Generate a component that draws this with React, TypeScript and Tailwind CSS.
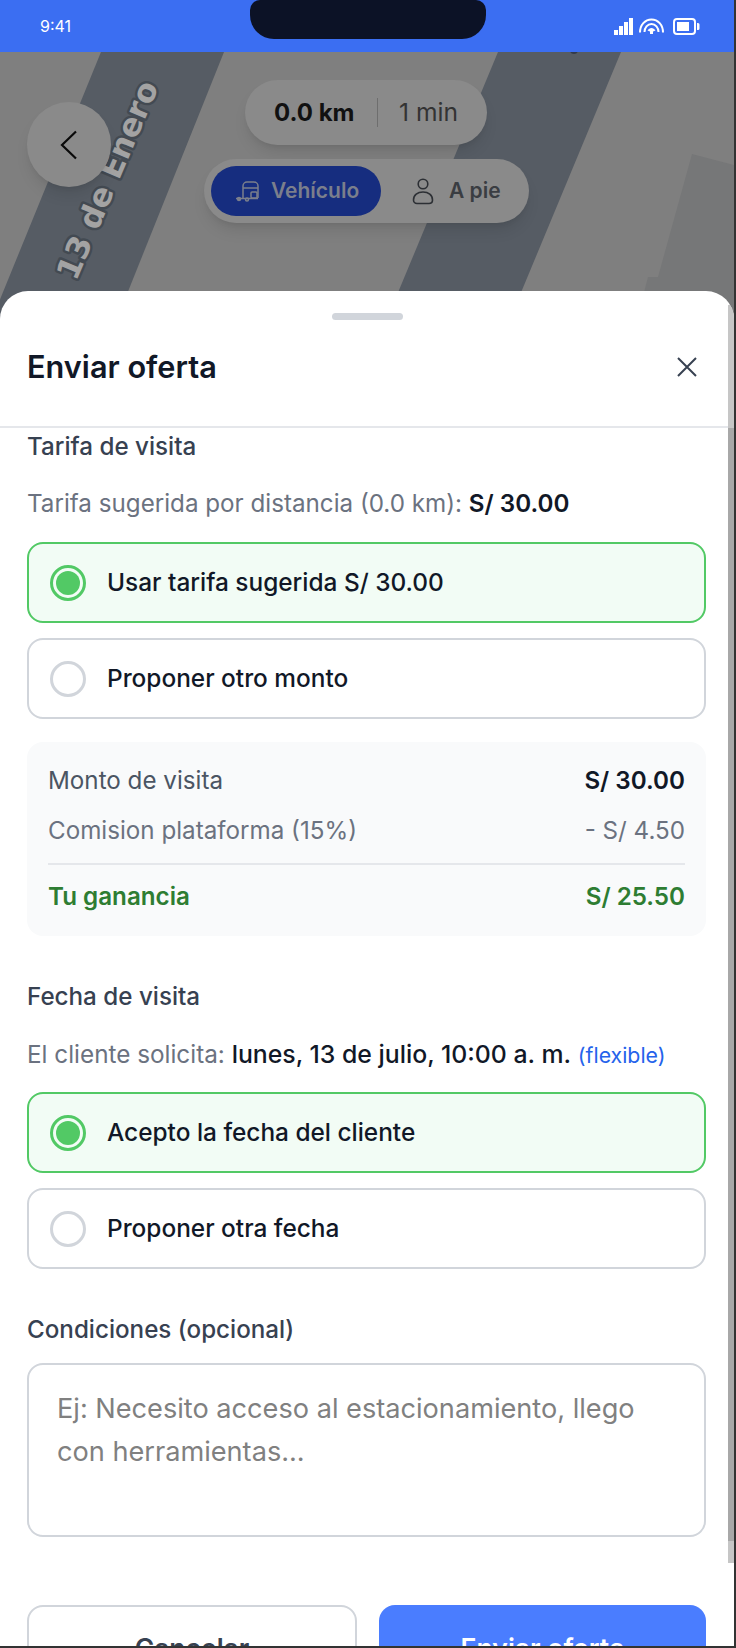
import React from "react";

function SignalIcon() {
  return (
    <svg width="19" height="17" viewBox="0 0 19 17" fill="white" aria-hidden="true">
      <rect x="0" y="12" width="4" height="5" />
      <rect x="5" y="8" width="4" height="9" />
      <rect x="10" y="4" width="4" height="13" />
      <rect x="15" y="0" width="4" height="17" />
    </svg>
  );
}

function WifiIcon() {
  return (
    <svg width="25" height="16" viewBox="0 0 25 16" fill="none" stroke="white" strokeWidth="2" aria-hidden="true">
      <path d="M1 14.500C1 7 6 1.500 12.500 1.500S24 7 24 14.500" />
      <path d="M5.500 14C5.500 9.500 8.500 6 12.500 6S19.500 9.500 19.500 14" />
      <path d="M8.500 12.500C9.500 11 11 10 12.500 10S15.500 11 16.500 12.500L14 13.500V16H11V13.500Z" fill="white" stroke="none" />
    </svg>
  );
}

function BatteryIcon() {
  return (
    <svg width="27" height="17" viewBox="0 0 27 17" fill="none" aria-hidden="true">
      <rect x="1" y="1" width="21" height="15" rx="3" stroke="white" strokeWidth="2" />
      <rect x="4" y="4" width="12" height="9" fill="white" />
      <path d="M24 5h1a1.500 1.500 0 0 1 1.500 1.500v4A1.500 1.500 0 0 1 25 12h-1z" fill="white" />
    </svg>
  );
}

function VehicleIcon() {
  return (
    <svg width="24" height="21" viewBox="0 0 24 21" fill="none" stroke="#7b7f8c" strokeWidth="1.500" aria-hidden="true">
      <path d="M8 17V5a4 4 0 0 1 4-4h7a4 4 0 0 1 4 4v12" />
      <path d="M8 7h15" />
      <rect x="16" y="11" width="6" height="6" rx="1" />
      <path d="M1 17.500h22" />
      <circle cx="4" cy="18" r="1.500" fill="#7b7f8c" />
      <circle cx="12" cy="18.500" r="1.500" />
    </svg>
  );
}

function PersonIcon() {
  return (
    <svg width="22" height="27" viewBox="0 0 22 27" fill="none" stroke="#2c2f34" strokeWidth="1.600" aria-hidden="true">
      <circle cx="11" cy="6" r="4.800" />
      <path d="M1.500 22c0-5 4-8 9.500-8s9.500 3 9.500 8c0 2-1.500 3.500-3.500 3.500H5c-2 0-3.500-1.500-3.500-3.500z" />
    </svg>
  );
}

function MapBackground() {
  return (
    <svg className="absolute inset-0" width="734" height="267" viewBox="0 52 734 267" aria-hidden="true">
      <rect x="0" y="52" width="734" height="267" fill="#7f7f7f" />
      <path d="M692 154L734 165V319H637L648 277L658 277Z" fill="#767778" />
      <path d="M101 52H224L117 319H-8Z" fill="#565c64" />
      <path d="M498 52H621L510 319H387Z" fill="#565c64" />
      <circle cx="574" cy="50" r="4" fill="#333a48" />
      <text
        x="76"
        y="282"
        transform="rotate(-67 76 282)"
        fontFamily="'DejaVu Sans', sans-serif"
        fontWeight="700"
        fontSize="31.500"
        fill="#a3a3a3"
        stroke="#434a52"
        strokeWidth="5"
        strokeLinejoin="round"
        style={{ paintOrder: "stroke" }}
      >
        13 de Enero
      </text>
    </svg>
  );
}

function OptionCard({ label, selected }: { label: string; selected?: boolean }) {
  return (
    <div
      className={
        selected
          ? "flex h-[81px] items-center gap-[21px] rounded-[16px] border-2 border-[#52c965] bg-[#f2fcf5] pl-[21px]"
          : "flex h-[81px] items-center gap-[21px] rounded-[16px] border-2 border-[#d1d5db] bg-white pl-[21px]"
      }
    >
      <span
        className={
          selected
            ? "flex h-[36px] w-[36px] items-center justify-center rounded-full border-[3px] border-[#52c965]"
            : "h-[36px] w-[36px] rounded-full border-[3px] border-[#d1d5db]"
        }
      >
        {selected && <span className="h-[24px] w-[24px] rounded-full bg-[#52c965]" />}
      </span>
      <span className="text-[24.400px] leading-none font-medium text-[#111827]">{label}</span>
    </div>
  );
}

export default function App() {
  return (
    <div className="flex h-[1648px] w-[736px] flex-col overflow-hidden border-r-2 border-b-2 border-[#333333] bg-white font-['Inter',sans-serif]">
      <div className="relative flex h-[52px] shrink-0 items-center justify-between bg-[#3b6ef2] pr-[34px] pl-[40px]">
        <span className="text-[16px] font-normal text-white">9:41</span>
        <div className="absolute top-0 left-[250px] h-[39px] w-[236px] rounded-t-[10px] rounded-b-[24px] bg-[#0c1226]" />
        <div className="flex items-center">
          <SignalIcon />
          <span className="ml-[6px]">
            <WifiIcon />
          </span>
          <span className="ml-[9px]">
            <BatteryIcon />
          </span>
        </div>
      </div>

      <div className="relative h-[267px] shrink-0 overflow-hidden">
        <MapBackground />
        <button className="absolute top-[50px] left-[27px] flex h-[85px] w-[84px] items-center justify-center rounded-full bg-[#8a8a8a] shadow-lg">
          <svg width="20" height="30" viewBox="0 0 20 30" fill="none" stroke="#0a0a0a" strokeWidth="2.200" aria-hidden="true">
            <path d="M17 1.500L3 15l14 13.500" />
          </svg>
        </button>
        <div className="absolute top-[28px] left-[245px] flex h-[65px] w-[242px] items-center rounded-full bg-[#8a8a8a] pl-[29px] shadow-lg">
          <span className="w-[81px] text-[24px] font-bold whitespace-nowrap text-[#111111]">0.0 km</span>
          <span className="mr-[21px] ml-[22px] h-[29px] w-px bg-[#6e6e6e]" />
          <span className="text-[24.600px] font-normal whitespace-nowrap text-[#333333]">1 min</span>
        </div>
        <div className="absolute top-[107px] left-[204px] flex h-[64px] w-[325px] items-center rounded-full bg-[#8a8a8a] pl-[7px] shadow-lg">
          <div className="flex h-[50px] w-[170px] items-center gap-[12px] rounded-full bg-[#162d7f] pl-[24px]">
            <VehicleIcon />
            <span className="text-[21px] font-semibold text-[#7b7f8c]">Vehículo</span>
          </div>
          <div className="ml-[31px] flex items-center gap-[15px]">
            <PersonIcon />
            <span className="text-[21px] font-semibold text-[#3a3d42]">A pie</span>
          </div>
        </div>
      </div>

      <div className="relative -mt-[28px] min-h-0 flex-1 overflow-hidden rounded-t-[28px] bg-white">
        <div className="absolute top-[14px] right-0 bottom-[83px] w-[6px] bg-[#c6c6c6]">
          <div className="mt-[123px] h-[1113px] bg-[#a8a8a8]" />
        </div>
        <div className="flex justify-center pt-[22px]">
          <div className="h-[7px] w-[71px] rounded-full bg-[#d1d5db]" />
        </div>
        <div className="flex h-[108px] items-center justify-between border-b-2 border-[#e5e7eb] pr-[36px] pb-[12px] pl-[27px]">
          <h2 className="text-[30.700px] font-semibold text-[#111827]">Enviar oferta</h2>
          <svg width="22" height="22" viewBox="0 0 22 22" fill="none" stroke="#374151" strokeWidth="2" aria-hidden="true">
            <path d="M2 2l18 18M20 2L2 20" />
          </svg>
        </div>

        <div className="pr-[28px] pl-[27px]">
          <h3 className="mt-[4px] text-[24.200px] leading-[30px] font-medium text-[#374151]">Tarifa de visita</h3>
          <p className="mt-[27px] text-[24.200px] leading-[30px] text-[#6b7280]">
            Tarifa sugerida por distancia (0.0 km): <span className="font-semibold text-[#111827]">S/ 30.00</span>
          </p>
          <div className="mt-[23px] flex flex-col gap-[15px]">
            <OptionCard label="Usar tarifa sugerida S/ 30.00" selected />
            <OptionCard label="Proponer otro monto" />
          </div>

          <div className="mt-[23px] rounded-[16px] bg-[#f9fafb] px-[21px] pt-[22px] pb-[22px] text-[24.200px] leading-[34px]">
            <div className="flex justify-between">
              <span className="text-[#4b5563]">Monto de visita</span>
              <span className="font-semibold text-[#111827]">S/ 30.00</span>
            </div>
            <div className="mt-[16px] flex justify-between text-[#6b7280]">
              <span>Comision plataforma (15%)</span>
              <span>- S/ 4.50</span>
            </div>
            <div className="mt-[15px] border-t-2 border-[#e5e7eb] pt-[15px]">
              <div className="flex justify-between font-semibold text-[#2e7d32]">
                <span>Tu ganancia</span>
                <span>S/ 25.50</span>
              </div>
            </div>
          </div>

          <h3 className="mt-[46px] text-[24.200px] leading-[30px] font-medium text-[#374151]">Fecha de visita</h3>
          <p className="mt-[27px] text-[24.300px] leading-[30px] whitespace-nowrap text-[#6b7280]">
            El cliente solicita: <span className="text-[24.800px] font-medium text-[#111827]">lunes, 13 de julio, 10:00 a. m.</span>{" "}
            <span className="text-[21.300px] text-[#2563eb]">(flexible)</span>
          </p>
          <div className="mt-[22px] flex flex-col gap-[15px]">
            <OptionCard label="Acepto la fecha del cliente" selected />
            <OptionCard label="Proponer otra fecha" />
          </div>

          <h3 className="mt-[46px] text-[24.200px] leading-[30px] font-medium text-[#374151]">Condiciones (opcional)</h3>
          <div className="mt-[18px] h-[174px] rounded-[16px] border-2 border-[#d1d5db] pt-[22px] pr-[40px] pl-[28px] text-[27.150px] leading-[43px] text-[#808080]">
            Ej: Necesito acceso al estacionamiento, llego con herramientas...
          </div>

          <div className="mt-[68px] flex gap-[22px]">
            <button className="h-[88px] w-[330px] rounded-[16px] border-2 border-[#d1d5db] bg-white text-[26.500px] font-semibold text-[#374151]">
              Cancelar
            </button>
            <button className="h-[88px] flex-1 rounded-[16px] bg-[#4a7dff] text-[26.500px] font-semibold text-white">
              Enviar oferta
            </button>
          </div>
        </div>
      </div>
    </div>
  );
}
